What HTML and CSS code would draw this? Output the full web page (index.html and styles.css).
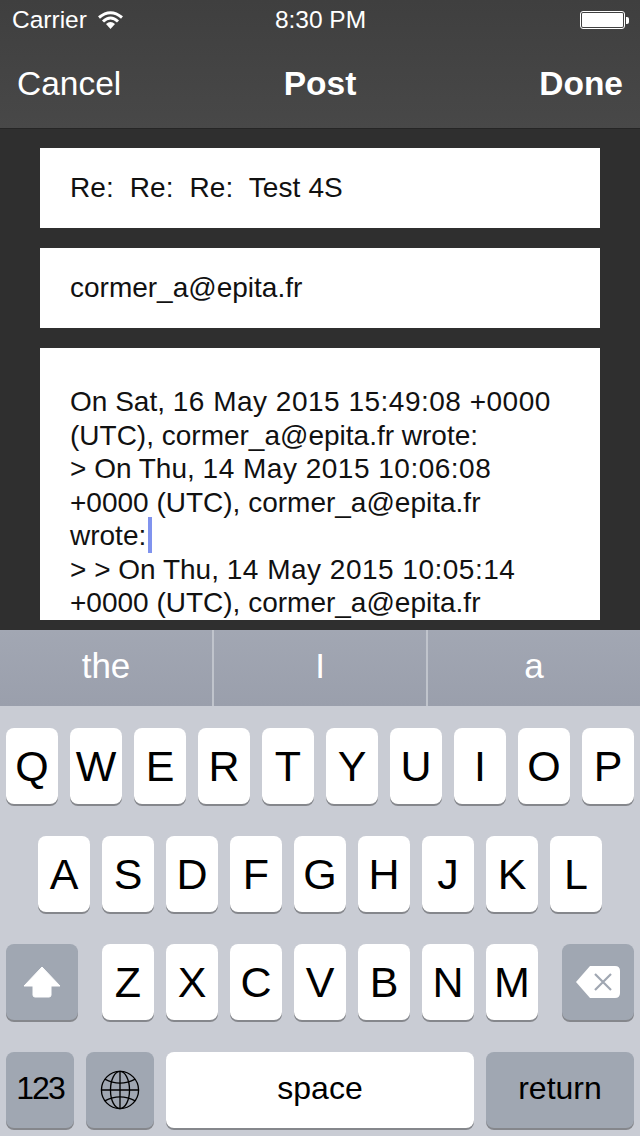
FILE: index.html
```html
<!DOCTYPE html>
<html>
  <head>
    <title>Post</title>
    <link rel="stylesheet" href="styles.css">
  </head>
  <body>
    <div class="phone">
      <header class="topbar">
        <div class="status">
          <div class="status-left">
            <span>Carrier</span>
            <svg class="wifi" width="25" height="18" viewBox="0 0 25 18">
              <path d="M1 6.5 Q12.5 -3 24 6.5" fill="none" stroke="#fff" stroke-width="3"/>
              <path d="M5 10.5 Q12.5 3.5 20 10.5" fill="none" stroke="#fff" stroke-width="3"/>
              <path d="M8 13 Q12.5 9 17 13 L12.5 18 Z" fill="#fff"/>
            </svg>
          </div>
          <div class="status-time">8:30 PM</div>
          <div class="status-right">
            <div class="battery"><div class="battery-fill"></div></div>
            <div class="battery-tip"></div>
          </div>
        </div>
        <nav class="nav">
          <span class="nav-btn">Cancel</span>
          <span class="nav-title">Post</span>
          <span class="nav-btn nav-done">Done</span>
        </nav>
      </header>

      <main class="content">
        <div class="field field-short"><span class="subject">Re:&nbsp; Re:&nbsp; Re:&nbsp; Test 4S</span></div>
        <div class="field field-short">cormer_a@epita.fr</div>
        <div class="field field-body">
          On Sat, <span class="stamp">16 May 2015 15:49:08 +0000</span><br>
          (UTC), cormer_a@epita.fr wrote:<br>
          &gt; On Thu, <span class="stamp">14 May 2015 10:06:08</span><br>
          +0000 (UTC), cormer_a@epita.fr<br>
          wrote:<span class="caret"></span><br>
          &gt; &gt; On Thu, <span class="stamp">14 May 2015 10:05:14</span><br>
          +0000 (UTC), cormer_a@epita.fr
        </div>
      </main>

      <div class="suggestions">
        <div class="suggestion">the</div>
        <div class="suggestion">I</div>
        <div class="suggestion">a</div>
      </div>

      <section class="keyboard">
        <div class="row">
          <div class="key">Q</div><div class="key">W</div><div class="key">E</div><div class="key">R</div><div class="key">T</div>
          <div class="key">Y</div><div class="key">U</div><div class="key">I</div><div class="key">O</div><div class="key">P</div>
        </div>
        <div class="row">
          <div class="key">A</div><div class="key">S</div><div class="key">D</div><div class="key">F</div><div class="key">G</div>
          <div class="key">H</div><div class="key">J</div><div class="key">K</div><div class="key">L</div>
        </div>
        <div class="row row-third">
          <div class="key key-dark key-shift">
            <svg width="38" height="32" viewBox="0 0 38 32">
              <path d="M19 1 L37 20 H28 V29 Q28 31 26 31 H12 Q10 31 10 29 V20 H1 Z" fill="#fff" stroke="#fff" stroke-linejoin="round"/>
            </svg>
          </div>
          <div class="letters">
            <div class="key">Z</div><div class="key">X</div><div class="key">C</div><div class="key">V</div>
            <div class="key">B</div><div class="key">N</div><div class="key">M</div>
          </div>
          <div class="key key-dark key-shift">
            <svg width="44" height="32" viewBox="0 0 44 32">
              <path d="M14 0 H39 Q44 0 44 5 V27 Q44 32 39 32 H14 L0 16 Z" fill="#fff"/>
              <path d="M19 8 L35 24 M35 8 L19 24" stroke="#a0a7b2" stroke-width="2.2" fill="none"/>
            </svg>
          </div>
        </div>
        <div class="row row-bottom">
          <div class="key key-dark key-small key-num">123</div>
          <div class="key key-dark key-globe">
            <svg width="40" height="40" viewBox="0 0 42 42" fill="none" stroke="#000" stroke-width="1.4">
              <circle cx="21" cy="21" r="19.5"/>
              <ellipse cx="21" cy="21" rx="10" ry="19.5"/>
              <path d="M21 1.5 V40.5 M1.5 21 H40.5"/>
              <path d="M5 9.5 Q21 18 37 9.5 M5 32.5 Q21 24 37 32.5"/>
            </svg>
          </div>
          <div class="key key-small key-space">space</div>
          <div class="key key-dark key-small key-return">return</div>
        </div>
      </section>
    </div>
  </body>
</html>
```

FILE: styles.css
```css
* {
  box-sizing: border-box;
}

body {
  margin: 0;
  font-family: "Liberation Sans", Arial, sans-serif;
  background: #2f2f2f;
}

.phone {
  width: 640px;
  height: 1136px;
  display: flex;
  flex-direction: column;
  overflow: hidden;
}

.topbar {
  height: 129px;
  color: #fff;
  background: linear-gradient(#3f3f3f, #484848);
  border-bottom: 1px solid #252525;
}

.status {
  height: 40px;
  display: grid;
  grid-template-columns: 1fr auto 1fr;
  align-items: center;
  padding: 0 11px 0 12px;
  font-size: 24.5px;
}

.status-left {
  display: flex;
  align-items: center;
  gap: 11px;
}

.status-right {
  display: flex;
  align-items: center;
  justify-content: flex-end;
}

.battery {
  width: 45px;
  height: 18px;
  border: 1px solid #fff;
  border-radius: 3px;
  padding: 1px;
}

.battery-fill {
  height: 100%;
  background: #fff;
  border-radius: 1px;
}

.battery-tip {
  width: 3px;
  height: 7px;
  margin-left: 1px;
  background: #fff;
  border-radius: 0 2px 2px 0;
}

.nav {
  height: 88px;
  display: grid;
  grid-template-columns: 1fr auto 1fr;
  align-items: center;
  padding: 0 17px;
  font-size: 33.5px;
}

.nav-btn {
  margin-top: -1px;
}

.nav-title {
  font-weight: bold;
  margin-top: -1px;
}

.nav-done {
  font-weight: bold;
  text-align: right;
}

.content {
  height: 501px;
  padding: 19px 40px 0;
  background: #2f2f2f;
  display: flex;
  flex-direction: column;
  gap: 20px;
}

.field {
  background: #fff;
  color: #111;
  padding: 0 30px;
  font-size: 28px;
}

.field-short {
  height: 80px;
  display: flex;
  align-items: center;
}

.subject {
  letter-spacing: 0.12px;
}

.field-body {
  height: 272px;
  padding-top: 37px;
  line-height: 33.5px;
  overflow: hidden;
  white-space: nowrap;
}

.stamp {
  letter-spacing: 0.5px;
}

.caret {
  display: inline-block;
  width: 4px;
  height: 36px;
  margin: -10px 0 -8px 2px;
  vertical-align: baseline;
  background: #8093ee;
}

.suggestions {
  height: 76px;
  display: flex;
  background: linear-gradient(#a2a7b3, #9a9fac);
}

.suggestion {
  flex: 1;
  display: flex;
  align-items: center;
  justify-content: center;
  padding-bottom: 4px;
  font-size: 35px;
  color: #fff;
  border-left: 2px solid #c0c4cc;
}

.suggestion:first-child {
  border-left: 0;
}

.keyboard {
  flex: 1;
  background: #c9ccd4;
  padding: 22px 6px 0;
  display: flex;
  flex-direction: column;
  gap: 32px;
}

.row {
  height: 76px;
  display: flex;
  justify-content: center;
  gap: 12px;
}

.row-third {
  justify-content: space-between;
}

.letters {
  display: flex;
  gap: 12px;
}

.key {
  width: 52px;
  height: 76px;
  display: flex;
  align-items: center;
  justify-content: center;
  background: #fff;
  color: #000;
  border-radius: 8px;
  font-size: 43px;
  box-shadow: 0 2px 0 #85878c;
}

.key-dark {
  background: #a0a7b2;
}

.key-shift {
  width: 72px;
}

.key-small {
  font-size: 32px;
  padding-bottom: 4px;
}

.key-num {
  width: 68px;
  letter-spacing: -2px;
}

.key-globe {
  width: 68px;
}

.key-space {
  width: 308px;
}

.key-return {
  width: 148px;
}
```
